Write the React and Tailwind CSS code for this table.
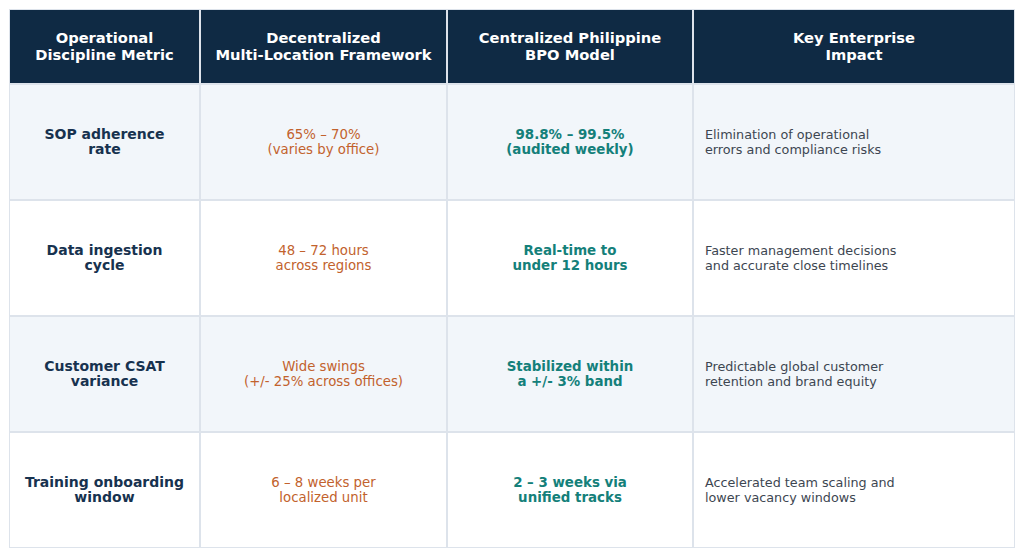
const rows = [
  {
    metric: ["SOP adherence", "rate"],
    decentral: ["65% – 70%", "(varies by office)"],
    central: ["98.8% – 99.5%", "(audited weekly)"],
    impact: ["Elimination of operational", "errors and compliance risks"],
  },
  {
    metric: ["Data ingestion", "cycle"],
    decentral: ["48 – 72 hours", "across regions"],
    central: ["Real-time to", "under 12 hours"],
    impact: ["Faster management decisions", "and accurate close timelines"],
  },
  {
    metric: ["Customer CSAT", "variance"],
    decentral: ["Wide swings", "(+/- 25% across offices)"],
    central: ["Stabilized within", "a +/- 3% band"],
    impact: ["Predictable global customer", "retention and brand equity"],
  },
  {
    metric: ["Training onboarding", "window"],
    decentral: ["6 – 8 weeks per", "localized unit"],
    central: ["2 – 3 weeks via", "unified tracks"],
    impact: ["Accelerated team scaling and", "lower vacancy windows"],
  },
];

const headers = [
  ["Operational", "Discipline Metric"],
  ["Decentralized", "Multi-Location Framework"],
  ["Centralized Philippine", "BPO Model"],
  ["Key Enterprise", "Impact"],
];

function Lines({ lines }) {
  return lines.map((l, i) => <div key={i}>{l}</div>);
}

export default function App() {
  return (
    <div className="w-[1024px] h-[558px] bg-white pt-[9px] pl-[9px] font-['DejaVu_Sans',sans-serif]">
      <div className="w-[1006px] border border-[#dde3eb] bg-[#dde3eb] grid grid-cols-[189px_245px_244px_320px] gap-x-[2px] gap-y-[2px]">
        {headers.map((h, i) => (
          <div
            key={i}
            className="h-[73px] pb-[2px] bg-[#0f2a44] text-white font-bold text-[14.7px] leading-[17px] flex flex-col items-center justify-center text-center"
          >
            <Lines lines={h} />
          </div>
        ))}
        {rows.map((r, i) => {
          const bg = i % 2 === 0 ? "bg-[#f2f6fa]" : "bg-white";
          return [
            <div key={i + "a"} className={`h-[114px] ${bg} flex flex-col items-center justify-center text-center font-bold text-[14px] leading-[15px] text-[#17324f]`}>
              <Lines lines={r.metric} />
            </div>,
            <div key={i + "b"} className={`h-[114px] ${bg} flex flex-col items-center justify-center text-center text-[13.3px] leading-[15px] text-[#c2622d]`}>
              <Lines lines={r.decentral} />
            </div>,
            <div key={i + "c"} className={`h-[114px] ${bg} flex flex-col items-center justify-center text-center font-bold text-[13.4px] leading-[15px] text-[#14807a]`}>
              <Lines lines={r.central} />
            </div>,
            <div key={i + "d"} className={`h-[114px] ${bg} flex flex-col justify-center pl-[11px] text-[12.75px] leading-[15px] text-[#3d4651]`}>
              <Lines lines={r.impact} />
            </div>,
          ];
        })}
      </div>
    </div>
  );
}
